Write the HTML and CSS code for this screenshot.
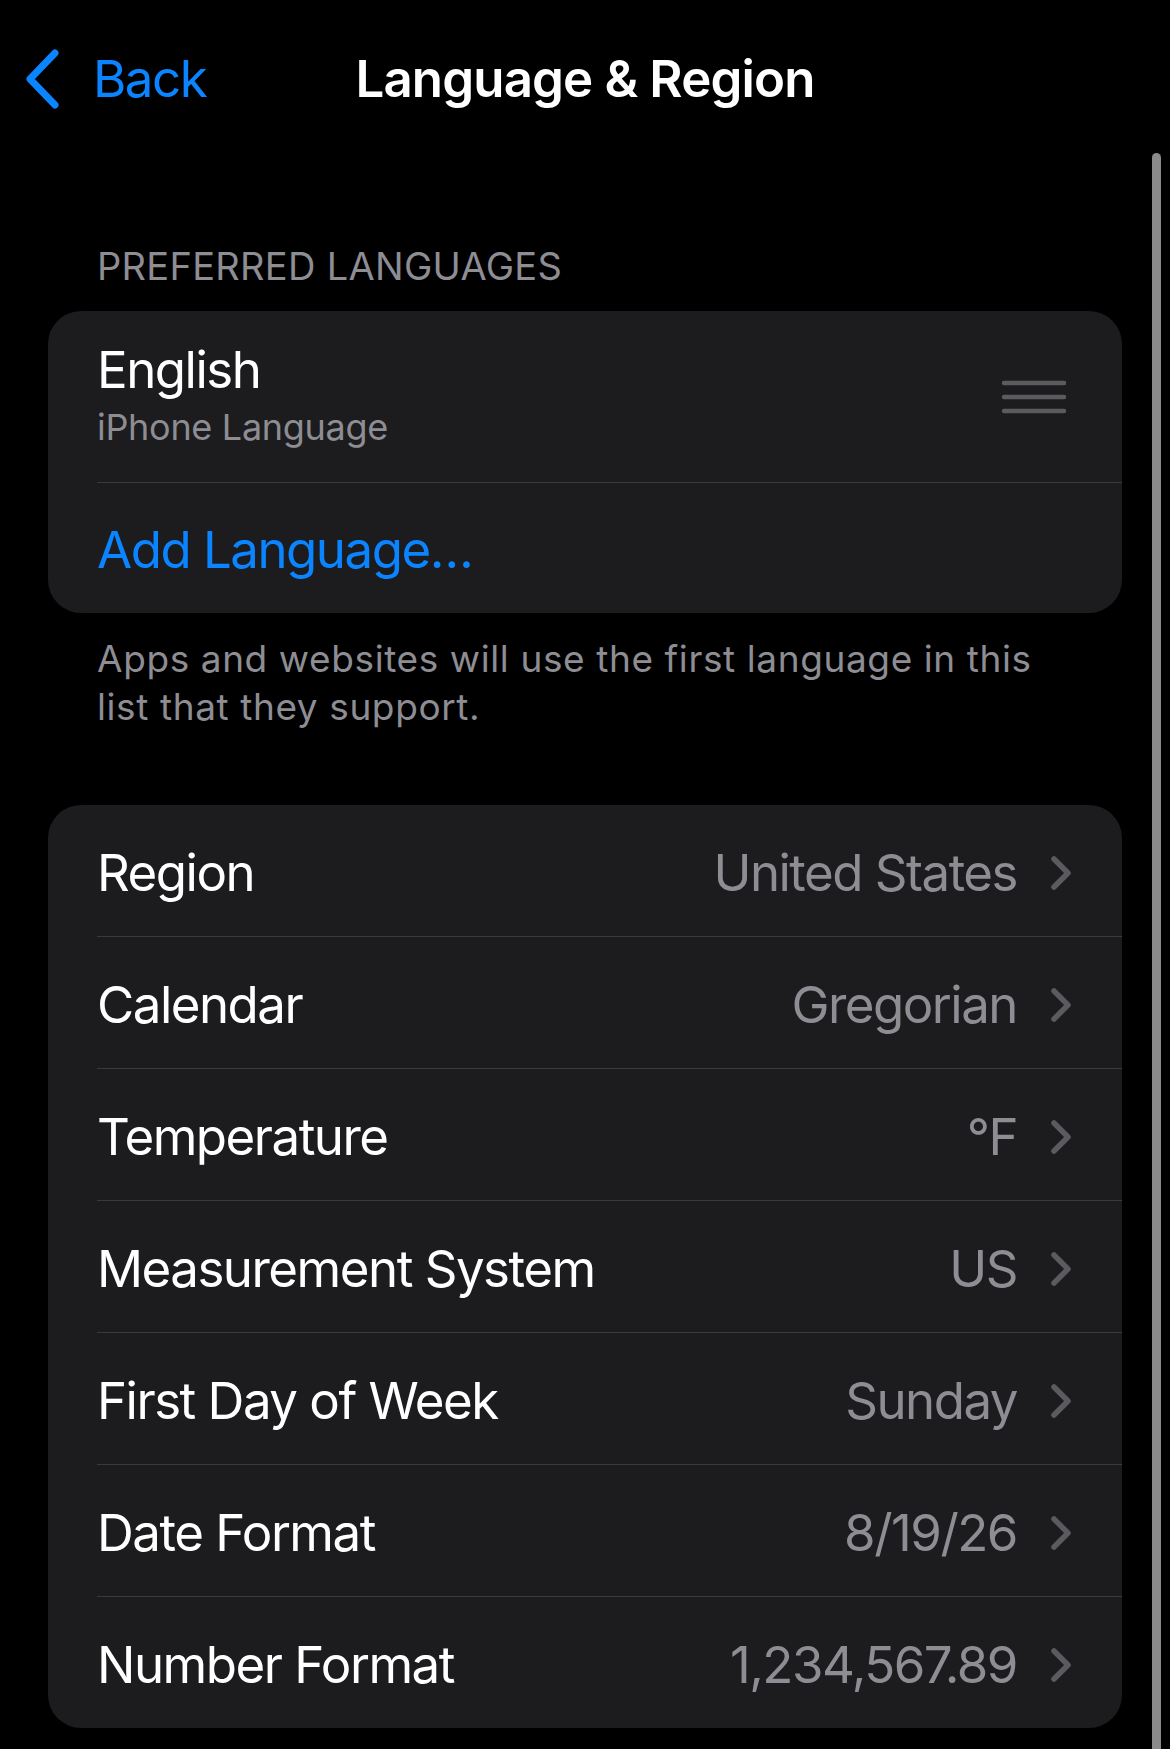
FILE: index.html
```html
<!DOCTYPE html>
<html lang="en">
  <head>
    <meta charset="UTF-8" />
    <meta name="viewport" content="width=device-width, initial-scale=1.0" />
    <title>Language &amp; Region</title>
    <link rel="stylesheet" href="styles.css">
  </head>
  <body>
    <div class="screen">
      <header class="navbar">
        <a class="back" href="#">
          <svg class="back-chevron" width="36" height="60" viewBox="0 0 36 60">
            <path d="M30 4 L5 30 L30 56" fill="none" stroke="#0a84ff" stroke-width="7" stroke-linecap="round" stroke-linejoin="round"/>
          </svg>
          <span>Back</span>
        </a>
        <h1 class="title">Language &amp; Region</h1>
        <div></div>
      </header>

      <main class="content">
        <section class="group">
          <h2 class="group-header">PREFERRED LANGUAGES</h2>
          <div class="card">
            <div class="row">
              <div class="row-inner row-language">
                <div>
                  <div class="lang-name">English</div>
                  <div class="lang-sub">iPhone Language</div>
                </div>
                <svg class="handle" width="66" height="36" viewBox="0 0 66 36">
                  <g stroke="#5b5b5f" stroke-width="4.5" stroke-linecap="round">
                    <line x1="3" y1="4" x2="63" y2="4"/>
                    <line x1="3" y1="18" x2="63" y2="18"/>
                    <line x1="3" y1="32" x2="63" y2="32"/>
                  </g>
                </svg>
              </div>
            </div>
            <div class="row">
              <div class="row-inner row-add">
                <span class="link">Add Language…</span>
              </div>
            </div>
          </div>
          <p class="group-footer">Apps and websites will use the first language in this list that they support.</p>
        </section>

        <section class="group group-settings">
          <div class="card">
            <div class="row"><div class="row-inner"><span class="label">Region</span><span class="value">United States</span><svg class="chev" width="22" height="34" viewBox="0 0 22 34"><path d="M4 3 L18 17 L4 31" fill="none" stroke="#5b5b5f" stroke-width="5.5" stroke-linecap="round" stroke-linejoin="round"/></svg></div></div>
            <div class="row"><div class="row-inner"><span class="label">Calendar</span><span class="value">Gregorian</span><svg class="chev" width="22" height="34" viewBox="0 0 22 34"><path d="M4 3 L18 17 L4 31" fill="none" stroke="#5b5b5f" stroke-width="5.5" stroke-linecap="round" stroke-linejoin="round"/></svg></div></div>
            <div class="row"><div class="row-inner"><span class="label">Temperature</span><span class="value">°F</span><svg class="chev" width="22" height="34" viewBox="0 0 22 34"><path d="M4 3 L18 17 L4 31" fill="none" stroke="#5b5b5f" stroke-width="5.5" stroke-linecap="round" stroke-linejoin="round"/></svg></div></div>
            <div class="row"><div class="row-inner"><span class="label">Measurement System</span><span class="value">US</span><svg class="chev" width="22" height="34" viewBox="0 0 22 34"><path d="M4 3 L18 17 L4 31" fill="none" stroke="#5b5b5f" stroke-width="5.5" stroke-linecap="round" stroke-linejoin="round"/></svg></div></div>
            <div class="row"><div class="row-inner"><span class="label">First Day of Week</span><span class="value">Sunday</span><svg class="chev" width="22" height="34" viewBox="0 0 22 34"><path d="M4 3 L18 17 L4 31" fill="none" stroke="#5b5b5f" stroke-width="5.5" stroke-linecap="round" stroke-linejoin="round"/></svg></div></div>
            <div class="row"><div class="row-inner"><span class="label">Date Format</span><span class="value">8/19/26</span><svg class="chev" width="22" height="34" viewBox="0 0 22 34"><path d="M4 3 L18 17 L4 31" fill="none" stroke="#5b5b5f" stroke-width="5.5" stroke-linecap="round" stroke-linejoin="round"/></svg></div></div>
            <div class="row"><div class="row-inner"><span class="label">Number Format</span><span class="value">1,234,567.89</span><svg class="chev" width="22" height="34" viewBox="0 0 22 34"><path d="M4 3 L18 17 L4 31" fill="none" stroke="#5b5b5f" stroke-width="5.5" stroke-linecap="round" stroke-linejoin="round"/></svg></div></div>
          </div>
        </section>
      </main>

      <div class="scroll-indicator"></div>
    </div>
  </body>
</html>
```

FILE: styles.css
```css
html,
body {
  margin: 0;
  background-color: #000;
  font-family: Inter, "Noto Sans", Arial, sans-serif;
  color: #fff;
}

.screen {
  position: relative;
  width: 1170px;
  height: 1749px;
  overflow: hidden;
}

/* top bar */
.navbar {
  height: 158px;
  display: grid;
  grid-template-columns: 1fr auto 1fr;
  align-items: center;
}

.back {
  display: flex;
  align-items: center;
  padding-left: 25px;
  color: #0a84ff;
  text-decoration: none;
  font-size: 51px;
  line-height: 60px;
  letter-spacing: -1.5px;
}

.back-chevron {
  margin-right: 32px;
}

.title {
  margin: 0;
  font-size: 51px;
  line-height: 60px;
  font-weight: 600;
  letter-spacing: -0.85px;
}

/* groups */
.group-header {
  margin: 84px 0 21px 97px;
  font-size: 38px;
  line-height: 48px;
  font-weight: 400;
  color: #8d8d93;
  letter-spacing: 0.3px;
}

.card {
  margin: 0 48px;
  background-color: #1c1c1e;
  border-radius: 33px;
  overflow: hidden;
}

.row {
  padding-left: 49px;
}

.row + .row .row-inner {
  border-top: 1px solid #3a3a3d;
}

.row-inner {
  display: flex;
  align-items: center;
  height: 127px;
  padding: 4px 50px 0 0;
  font-size: 51px;
  line-height: 60px;
  letter-spacing: -1.5px;
}

.row-language {
  height: 167px;
  padding: 0 55px 4px 0;
  justify-content: space-between;
}

.row + .row .row-add {
  height: 126px;
}

.lang-name {
  font-size: 51px;
  line-height: 60px;
}

.lang-sub {
  margin-top: 5px;
  font-size: 36px;
  line-height: 44px;
  letter-spacing: -0.3px;
  color: #8d8d93;
}

.handle {
  margin-top: 4px;
}

.link {
  color: #0a84ff;
}

.label {
  flex: 1;
}

.value {
  color: #8d8d93;
  margin-right: 33px;
}

.chev {
  display: block;
}

.group-footer {
  margin: 22px 97px 0 97px;
  font-size: 37px;
  line-height: 48px;
  letter-spacing: 0.6px;
  color: #8d8d93;
}

.group-settings {
  margin-top: 74px;
}

.scroll-indicator {
  position: absolute;
  left: 1152px;
  top: 153px;
  width: 9px;
  height: 1640px;
  border-radius: 5px;
  background-color: #8a8a8a;
}
```
